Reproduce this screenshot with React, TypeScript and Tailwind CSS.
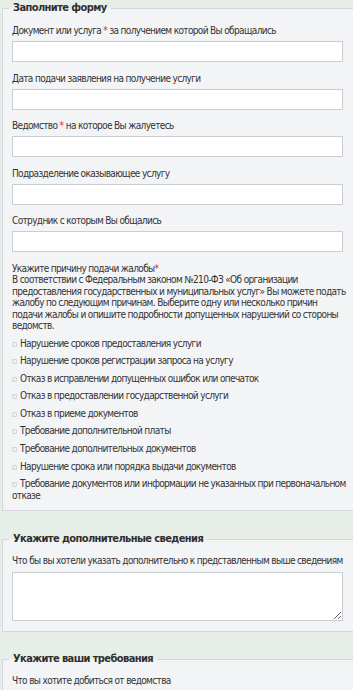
import React from 'react';

const Req = () => <span className="text-[#e3262f]">*</span>;

function Field({ children }: { children: React.ReactNode }) {
  return (
    <div className="mb-[10.5px]">
      <div className="leading-[12px] mb-[4px] whitespace-nowrap">{children}</div>
      <input type="text" className="block w-full h-[21px] border border-[#c9ccd1] bg-white outline-none" />
    </div>
  );
}

function Check({ children }: { children: React.ReactNode }) {
  return (
    <div className="mt-[6px] leading-[11.6px] whitespace-nowrap">
      <span className="inline-block w-[5px] h-[5px] mr-[3px] border border-[#d3d5d8] bg-[#eceef0] rounded-[1px]" />
      {children}
    </div>
  );
}

const reasons = [
  'Нарушение сроков предоставления услуги',
  'Нарушение сроков регистрации запроса на услугу',
  'Отказ в исправлении допущенных ошибок или опечаток',
  'Отказ в предоставлении государственной услуги',
  'Отказ в приеме документов',
  'Требование дополнительной платы',
  'Требование дополнительных документов',
  'Нарушение срока или порядка выдачи документов',
];

const legendCls =
  'ml-[-3px] px-[4px] text-[11px] font-bold leading-[14px] tracking-[-0.6px] text-[#2f2f2f]';
const boxCls =
  'min-w-0 border border-r-0 border-[#d3d6da] bg-[#f3f4f6] pl-[9px] pr-[10px]';

export default function App() {
  return (
    <div className="min-h-screen bg-[#e7eee7] pt-[1px] pl-[2px] text-[10px] tracking-[-0.65px] text-[#333] [font-family:'DejaVu_Sans_Condensed','DejaVu_Sans',sans-serif] overflow-hidden">
      <fieldset className={boxCls + ' pt-[10px] pb-[9px]'}>
        <legend className={legendCls}>Заполните форму</legend>

        <Field>
          Документ или услуга <Req /> за получением которой Вы обращались
        </Field>
        <Field>Дата подачи заявления на получение услуги</Field>
        <Field>
          Ведомство <Req /> на которое Вы жалуетесь
        </Field>
        <Field>Подразделение оказывающее услугу</Field>
        <Field>Сотрудник с которым Вы общались</Field>

        <div className="leading-[11.5px] whitespace-nowrap">
          Укажите причину подачи жалобы<Req />
          <br />
          В соответствии с Федеральным законом №210-ФЗ «Об организации
          <br />
          предоставления государственных и муниципальных услуг» Вы можете подать
          <br />
          жалобу по следующим причинам. Выберите одну или несколько причин
          <br />
          подачи жалобы и опишите подробности допущенных нарушений со стороны
          <br />
          ведомств.
        </div>

        <div className="mt-[2px]">
          {reasons.map((r) => (
            <Check key={r}>{r}</Check>
          ))}
          <Check>
            Требование документов или информации не указанных при первоначальном
            <br />
            отказе
          </Check>
        </div>
      </fieldset>

      <fieldset className={boxCls + ' mt-[21px] pt-[9px] pb-[10px]'}>
        <legend className={legendCls}>Укажите дополнительные сведения</legend>
        <div className="leading-[12px] mb-[5px] whitespace-nowrap">
          Что бы вы хотели указать дополнительно к представленным выше сведениям
        </div>
        <textarea className="block w-full h-[49px] border border-[#c9ccd1] bg-white outline-none" />
      </fieldset>

      <fieldset className={boxCls + ' mt-[20px] pt-[9px] pb-[10px]'}>
        <legend className={legendCls}>Укажите ваши требования</legend>
        <div className="leading-[12px] mb-[5px] whitespace-nowrap">Что вы хотите добиться от ведомства</div>
        <textarea className="block w-full h-[49px] border border-[#c9ccd1] bg-white outline-none" />
      </fieldset>
    </div>
  );
}
